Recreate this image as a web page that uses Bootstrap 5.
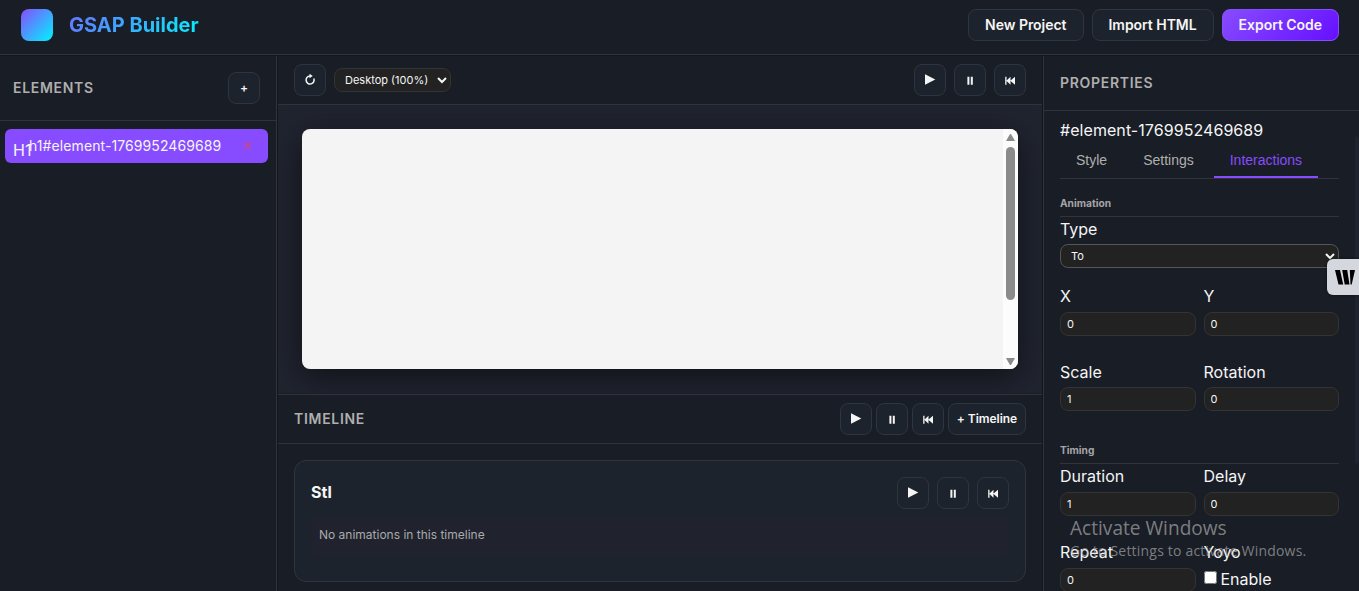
<!DOCTYPE html>
<html lang="en">

<head>
    <meta charset="UTF-8">
    <meta name="viewport" content="width=device-width, initial-scale=1.0">
    <title>GSAP Builder</title>
    <link rel="stylesheet" href="https://cdn.jsdelivr.net/npm/bootstrap@5.3.0/dist/css/bootstrap.min.css">
    <style>
        body {
            background: #12161d;
            color: #f5f5f5;
            font-family: Inter, "Liberation Sans", sans-serif;
            font-size: 16px;
            height: 100vh;
            overflow: hidden;
        }

        .panel-bg { background: #191d25; }
        .line-b { border-bottom: 1px solid #30333b; }

        /* Header */
        .app-header { height: 55px; padding: 0 20px 4px 21px; }
        .logo-box { width: 32px; height: 32px; border-radius: 8px; background: linear-gradient(135deg, #874cff, #00f5ff); }
        .app-name {
            font-size: 20px;
            font-weight: 700;
            line-height: 30px;
            background: linear-gradient(135deg, #874cff -25%, #00f5ff);
            -webkit-background-clip: text;
            color: transparent;
        }

        .tool-btn {
            --bs-btn-color: #f5f5f5;
            --bs-btn-bg: #1d232c;
            --bs-btn-border-color: #30343e;
            --bs-btn-hover-color: #fff;
            --bs-btn-hover-bg: #272e39;
            --bs-btn-hover-border-color: #444a56;
            --bs-btn-font-size: 14px;
            --bs-btn-font-weight: 600;
            --bs-btn-padding-y: 0;
            --bs-btn-padding-x: 16px;
            --bs-btn-border-radius: 8px;
            height: 32px;
            line-height: 30px;
            letter-spacing: -.04px;
            white-space: nowrap;
        }
        .export-btn { background: linear-gradient(135deg, #874cff, #6610ff); border-color: #8450ff; }
        .icon-btn { width: 32px; padding: 0; display: inline-flex; align-items: center; justify-content: center; font-size: 12px; }
        .icon-btn svg { display: block; }
        .timeline-btn { width: 78px; padding: 0; font-size: 12px; }

        /* Columns */
        .workspace { height: calc(100vh - 56px); margin-top: 1px; gap: 1px; }
        .side-left { width: 277px; border-right: 1px solid #30333b; }
        .side-right { width: 316px; border-left: 1px solid #30333b; }
        .heading-text { font-size: 14px; font-weight: 600; letter-spacing: .7px; color: #afafaf; margin: 0; line-height: 20px; }

        .elements-head { height: 65px; padding: 0 16px 0 13px; }
        .element-item { margin: 8px 8px 0 5px; height: 34px; border-radius: 6px; background: #874cff; font-size: 14px; padding: 0 16px 1px 8px; }
        .element-tag { width: 16px; font-size: 16px; padding-top: 8px; white-space: nowrap; }
        .element-name { letter-spacing: .09px; }

        .preview-bar { height: 49px; padding: 0 16px; }
        .dark-select, .dark-input {
            background: #222;
            border: 1px solid #333;
            border-radius: 8px;
            color: #f5f5f5;
            font-size: 11px;
            height: 24px;
            outline: 0;
        }
        .dark-select { padding: 0 3px 0 6px; }
        .dark-input { display: block; width: 100%; padding: 0 6px; }
        .device-select { width: 117px; }
        .type-select { border-color: #555; }

        .preview-area { height: 288px; padding: 24px; background: #20242f; overflow: hidden; }
        .preview-frame { height: 240px; border-radius: 8px; background: #f4f4f4; overflow: hidden; box-shadow: 0 8px 32px rgba(0, 0, 0, .5); }
        .frame-scroll { width: 15px; background: #fcfcfc; }

        /* Timeline */
        .timeline-head { height: 50px; margin-top: 1px; border-top: 1px solid #30333b; padding: 0 16px; }
        .timeline-card { margin: 16px 16px 0; height: 122px; padding: 16px; border: 1px solid #30343e; border-radius: 12px; background: #1d232c; }
        .timeline-title { font-size: 16px; font-weight: 700; line-height: 30px; margin: 0; }
        .timeline-empty { margin-top: 8px; height: 40px; padding: 0 8px; border-radius: 6px; background: #20232d; color: #a9aaac; font-size: 12px; line-height: 36px; }

        /* Properties */
        .props-head { height: 55px; padding: 0 16px; }
        .props-body { padding: 7px 20px 0 16px; }
        .prop-id { line-height: 24px; letter-spacing: .06px; }
        .prop-tabs { height: 37px; margin-bottom: 10px; border-bottom: 1px solid #30333b; font-family: "Liberation Sans", Arial, sans-serif; font-size: 14px; }
        .prop-tabs .nav-link { padding: 0 16px; height: 36px; line-height: 37px; color: #afafaf; border-bottom: 2px solid transparent; margin-right: 4px; }
        .prop-tabs .nav-link.active { color: #874cff; border-color: #874cff; }
        .section-name { font-size: 10.2px; font-weight: 700; color: #a5a5a5; height: 28px; line-height: 28px; border-bottom: 1px solid #333436; margin: 0; }
        .field { padding-bottom: 24px; }
        .field-label { display: block; height: 27.5px; line-height: 25px; font-weight: 400; }
        .type-label { height: 27px; }
        .timing-name { margin-top: 1px; }
        .timing-fields .field-label { height: 28px; }
        .enable-row { height: 21px; gap: 4px; }
        .enable-box { width: 13px; height: 13px; margin: 0 0 2px; }

        .panel-thumb { top: 136px; right: 0; width: 4px; height: 328px; border-radius: 2px; background: #1d242e; }
        .side-widget { top: 259px; right: 0; width: 32px; height: 36px; border-radius: 6px 0 0 6px; background: #d4d7de; box-shadow: 0 0 3px rgba(0, 0, 0, .5); }
        .watermark { left: 1070px; top: 516px; color: rgba(190, 190, 190, .62); font-family: "Open Sans", "Noto Sans", sans-serif; pointer-events: none; white-space: nowrap; }
        .watermark-title { font-size: 19.1px; line-height: 25px; }
        .watermark-text { font-size: 14px; line-height: 20px; letter-spacing: .2px; }
    </style>
</head>

<body>
    <!-- Shared glyphs -->
    <svg class="d-none">
        <symbol id="play" viewBox="0 0 12 12"><path d="M1 .3 11.300 5.500 1 10.800z" fill="#f5f5f5" /></symbol>
        <symbol id="pause" viewBox="0 0 12 12"><path d="M3.400 2.700h2v8h-2zM6.800 2.700h2v8h-2z" fill="#f5f5f5" /></symbol>
        <symbol id="rewind" viewBox="0 0 12 12"><path d="M1.200 2.700h1.300v8H1.200zM6.500 2.700v8L2.300 6.700zM11 2.700v8L6.300 6.700z" fill="#f5f5f5" /></symbol>
    </svg>

    <!-- Header -->
    <header class="app-header panel-bg line-b d-flex align-items-center justify-content-between">
        <div class="d-flex align-items-center gap-3">
            <div class="logo-box"></div>
            <div class="app-name">GSAP Builder</div>
        </div>
        <div class="d-flex gap-2">
            <button class="btn tool-btn" type="button">New Project</button>
            <button class="btn tool-btn" type="button">Import HTML</button>
            <button class="btn tool-btn export-btn" type="button">Export Code</button>
        </div>
    </header>

    <div class="workspace d-flex">
        <!-- Elements -->
        <aside class="side-left panel-bg flex-shrink-0">
            <div class="elements-head line-b d-flex align-items-center justify-content-between">
                <h2 class="heading-text">ELEMENTS</h2>
                <button class="btn tool-btn icon-btn" type="button">+</button>
            </div>
            <div class="element-item d-flex align-items-center">
                <span class="element-tag">H1</span>
                <span class="element-name flex-grow-1">h1#element-1769952469689</span>
                <svg width="9" height="9" viewBox="0 0 9 9" stroke="#d0457c" stroke-width="1.200"><path d="M1 1l7 7M8 1L1 8" /></svg>
            </div>
        </aside>

        <!-- Preview and timeline -->
        <main class="flex-grow-1 d-flex flex-column panel-bg">
            <div class="preview-bar line-b flex-shrink-0 d-flex align-items-center justify-content-between">
                <div class="d-flex align-items-center gap-2">
                    <button class="btn tool-btn icon-btn" type="button">
                        <svg width="12" height="12" viewBox="0 0 12 12" fill="none" stroke="#f5f5f5" stroke-width="1.500"><path d="M9.800 4.500A4 4 0 1 1 6.200 2" /><path d="M5.500-.3 8.700 2 5.500 4.300z" fill="#f5f5f5" stroke="none" /></svg>
                    </button>
                    <select class="dark-select device-select">
                        <option>Desktop (100%)</option>
                    </select>
                </div>
                <div class="d-flex gap-2">
                    <button class="btn tool-btn icon-btn" type="button"><svg width="12" height="12"><use href="#play" /></svg></button>
                    <button class="btn tool-btn icon-btn" type="button"><svg width="12" height="12"><use href="#pause" /></svg></button>
                    <button class="btn tool-btn icon-btn" type="button"><svg width="12" height="12"><use href="#rewind" /></svg></button>
                </div>
            </div>

            <div class="preview-area flex-shrink-0">
                <div class="preview-frame d-flex justify-content-end">
                    <div class="frame-scroll">
                        <svg class="d-block" width="15" height="240" fill="#8b8b8b">
                            <path d="M3 12h9L8.300 5.500q-.8-1-1.600 0z" />
                            <rect x="3" y="18" width="9" height="153" rx="4.500" />
                            <path d="M3 229h9L8.300 235.500q-.8 1-1.600 0z" />
                        </svg>
                    </div>
                </div>
            </div>

            <div class="timeline-head panel-bg line-b flex-shrink-0 d-flex align-items-center justify-content-between">
                <h2 class="heading-text">TIMELINE</h2>
                <div class="d-flex gap-1">
                    <button class="btn tool-btn icon-btn" type="button"><svg width="12" height="12"><use href="#play" /></svg></button>
                    <button class="btn tool-btn icon-btn" type="button"><svg width="12" height="12"><use href="#pause" /></svg></button>
                    <button class="btn tool-btn icon-btn" type="button"><svg width="12" height="12"><use href="#rewind" /></svg></button>
                    <button class="btn tool-btn timeline-btn" type="button">+ Timeline</button>
                </div>
            </div>
            <div class="timeline-card flex-shrink-0">
                <div class="d-flex justify-content-between">
                    <h3 class="timeline-title">Stl</h3>
                    <div class="d-flex gap-2">
                        <button class="btn tool-btn icon-btn" type="button"><svg width="12" height="12"><use href="#play" /></svg></button>
                        <button class="btn tool-btn icon-btn" type="button"><svg width="12" height="12"><use href="#pause" /></svg></button>
                        <button class="btn tool-btn icon-btn" type="button"><svg width="12" height="12"><use href="#rewind" /></svg></button>
                    </div>
                </div>
                <div class="timeline-empty">No animations in this timeline</div>
            </div>
        </main>

        <!-- Properties -->
        <aside class="side-right panel-bg flex-shrink-0 overflow-hidden">
            <div class="props-head line-b d-flex align-items-center">
                <h2 class="heading-text">PROPERTIES</h2>
            </div>
            <div class="props-body">
                <div class="prop-id">#element-1769952469689</div>
                <nav class="nav prop-tabs">
                    <a class="nav-link" href="#">Style</a>
                    <a class="nav-link" href="#">Settings</a>
                    <a class="nav-link active" href="#">Interactions</a>
                </nav>

                <h4 class="section-name">Animation</h4>
                <div class="field pb-3">
                    <label class="field-label type-label" for="type">Type</label>
                    <select class="dark-select type-select w-100 d-block" id="type">
                        <option>To</option>
                    </select>
                </div>
                <div class="row gx-2">
                    <div class="col-6 field">
                        <label class="field-label" for="x">X</label>
                        <input class="dark-input" id="x" value="0">
                    </div>
                    <div class="col-6 field">
                        <label class="field-label" for="y">Y</label>
                        <input class="dark-input" id="y" value="0">
                    </div>
                    <div class="col-6 field">
                        <label class="field-label" for="scale">Scale</label>
                        <input class="dark-input" id="scale" value="1">
                    </div>
                    <div class="col-6 field">
                        <label class="field-label" for="rotation">Rotation</label>
                        <input class="dark-input" id="rotation" value="0">
                    </div>
                </div>

                <h4 class="section-name timing-name">Timing</h4>
                <div class="row gx-2 timing-fields">
                    <div class="col-6 field">
                        <label class="field-label" for="duration">Duration</label>
                        <input class="dark-input" id="duration" value="1">
                    </div>
                    <div class="col-6 field">
                        <label class="field-label" for="delay">Delay</label>
                        <input class="dark-input" id="delay" value="0">
                    </div>
                    <div class="col-6 field">
                        <label class="field-label" for="repeat">Repeat</label>
                        <input class="dark-input" id="repeat" value="0">
                    </div>
                    <div class="col-6 field">
                        <label class="field-label" for="yoyo">Yoyo</label>
                        <div class="enable-row d-flex align-items-center">
                            <input class="enable-box" type="checkbox" id="yoyo">
                            <span>Enable</span>
                        </div>
                    </div>
                </div>
            </div>
        </aside>
    </div>

    <!-- Overlays -->
    <div class="panel-thumb position-absolute"></div>
    <div class="side-widget position-absolute">
        <svg width="32" height="36" viewBox="0 0 32 36"><path d="M8 11h5l3.200 14.500H11.500zM15.200 11h5l2.300 14.500h-4.800zM22.800 11H28l-3.300 14.500h-1.200z" fill="#000" /></svg>
    </div>
    <div class="watermark position-absolute">
        <div class="watermark-title">Activate Windows</div>
        <div class="watermark-text">Go to Settings to activate Windows.</div>
    </div>

    <script src="https://cdn.jsdelivr.net/npm/bootstrap@5.3.0/dist/js/bootstrap.bundle.min.js"></script>
</body>

</html>
